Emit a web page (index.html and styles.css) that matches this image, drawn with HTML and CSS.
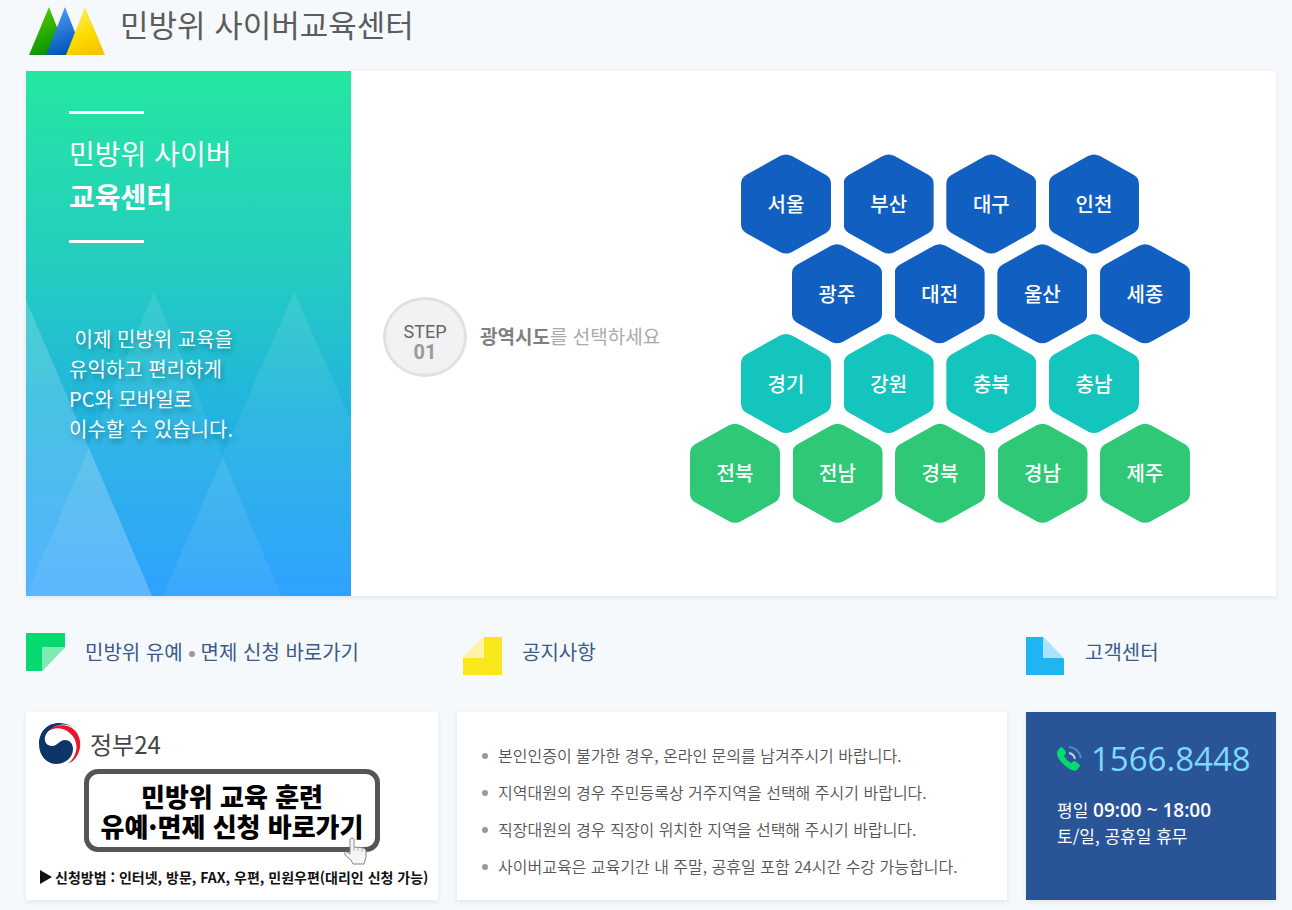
FILE: index.html
```html
<!DOCTYPE html>
<html lang="ko">
<head>
    <meta charset="UTF-8">
    <meta name="viewport" content="width=device-width, initial-scale=1.0">
    <title>민방위 사이버교육센터</title>
    <link rel="stylesheet" href="styles.css">
</head>
<body>

    <header class="header">
        <svg class="logo" width="78" height="49" viewBox="0 0 78 49" aria-hidden="true">
            <defs>
                <linearGradient id="logoGreen" x1="0" y1="0" x2="0.4" y2="1">
                    <stop offset="0" stop-color="#5fd000"/>
                    <stop offset="1" stop-color="#079400"/>
                </linearGradient>
                <linearGradient id="logoBlue" x1="0" y1="0" x2="0.3" y2="1">
                    <stop offset="0" stop-color="#5aa4ff"/>
                    <stop offset="1" stop-color="#0057b8"/>
                </linearGradient>
                <linearGradient id="logoYellow" x1="0.2" y1="0" x2="0.6" y2="1">
                    <stop offset="0" stop-color="#fff06a"/>
                    <stop offset="0.6" stop-color="#fddb00"/>
                    <stop offset="1" stop-color="#f7c400"/>
                </linearGradient>
            </defs>
            <path d="M21 0L40 48H1Z" fill="url(#logoGreen)"/>
            <path d="M37 0L56 48H18Z" fill="url(#logoBlue)"/>
            <path d="M57 0L77 48H38Z" fill="url(#logoYellow)"/>
        </svg>
        <h1 class="site-title">민방위 사이버교육센터</h1>
    </header>

    <main>
        <section class="hero">
            <div class="intro">
                <svg class="intro-bg" viewBox="0 0 325 525" preserveAspectRatio="none" aria-hidden="true">
                    <defs>
                        <linearGradient id="fade" x1="0" y1="0" x2="0" y2="1">
                            <stop offset="0" stop-color="#fff" stop-opacity="0.1"/>
                            <stop offset="1" stop-color="#fff" stop-opacity="0"/>
                        </linearGradient>
                    </defs>
                    <path d="M0 229L126 525H0Z" fill="#fff" fill-opacity="0.18"/>
                    <path d="M128 221L255 525H0Z" fill="url(#fade)"/>
                    <path d="M268 221L325 350V525H136Z" fill="url(#fade)"/>
                    <path d="M63 377L126 525H0Z" fill="#fff" fill-opacity="0.06"/>
                    <path d="M197 387L255 525H136Z" fill="#fff" fill-opacity="0.06"/>
                </svg>
                <h2 class="intro-title">민방위 사이버<br><strong>교육센터</strong></h2>
                <p class="intro-text">&nbsp;이제 민방위 교육을<br>유익하고 편리하게<br>PC와 모바일로<br>이수할 수 있습니다.</p>
            </div>

            <div class="picker">
                <div class="step">
                    <div class="step-badge"><span>STEP</span><b>01</b></div>
                    <p class="step-text"><strong>광역시도</strong>를 선택하세요</p>
                </div>
                <nav class="regions">
                    <div class="row row-center">
                        <a class="hex" href="#">서울</a>
                        <a class="hex" href="#">부산</a>
                        <a class="hex" href="#">대구</a>
                        <a class="hex" href="#">인천</a>
                    </div>
                    <div class="row row-right">
                        <a class="hex" href="#">광주</a>
                        <a class="hex" href="#">대전</a>
                        <a class="hex" href="#">울산</a>
                        <a class="hex" href="#">세종</a>
                    </div>
                    <div class="row row-center">
                        <a class="hex teal" href="#">경기</a>
                        <a class="hex teal" href="#">강원</a>
                        <a class="hex teal" href="#">충북</a>
                        <a class="hex teal" href="#">충남</a>
                    </div>
                    <div class="row">
                        <a class="hex green" href="#">전북</a>
                        <a class="hex green" href="#">전남</a>
                        <a class="hex green" href="#">경북</a>
                        <a class="hex green" href="#">경남</a>
                        <a class="hex green" href="#">제주</a>
                    </div>
                </nav>
            </div>
        </section>

        <div class="info">
            <section class="info-col">
                <div class="info-head">
                    <svg width="39" height="43" viewBox="0 0 39 43" aria-hidden="true">
                        <path d="M0 0H39V14L16 38H0Z" fill="#05d96f"/>
                        <path d="M16 14H39L16 38Z" fill="#7eebb4"/>
                    </svg>
                    <h3>민방위 유예<span class="dot"></span>면제 신청 바로가기</h3>
                </div>
                <a class="card banner" href="#">
                    <span class="gov">
                        <svg width="43" height="42" viewBox="0 0 43 42" aria-hidden="true">
                            <path d="M9 9C16 1 31 -1 39 10C46 21 41 36 30 41C38 34 41 24 36 15C30 5 18 2 9 9Z" fill="#e9152b"/>
                            <path d="M35 4C30 1 26 0 21 0C9 0 1 9 1 21C1 33 9 41 18 41C28 41 35 34 35 26C35 20 31 17 27 17C21 17 20 23 14 23C9 23 6 19 7 14C9 7 16 3 22 2C27 1 31 2 35 4Z" fill="#0d3568"/>
                        </svg>
                        <span>정부24</span>
                    </span>
                    <span class="banner-box">
                        민방위 교육 훈련<br>유예·면제 신청 바로가기
                        <svg class="hand" width="26" height="28" viewBox="0 0 26 28" aria-hidden="true">
                            <path d="M7 2Q9 0 11 2V10L20 11Q23 12 23 14V20L21 27H10L8 23L2 18Q1 14 4 15L7 17Z" fill="#f6f6f6" stroke="#888" stroke-width="1"/>
                            <path d="M11 10V14M15 11V14M19 12V15" stroke="#aaa" stroke-width="1"/>
                        </svg>
                    </span>
                    <span class="banner-note">
                        <svg width="12" height="14" viewBox="0 0 12 14" aria-hidden="true"><path d="M0 0L12 7L0 14Z" fill="#111"/></svg>
                        신청방법 : 인터넷, 방문, FAX, 우편, 민원우편(대리인 신청 가능)
                    </span>
                </a>
            </section>

            <section class="info-col">
                <div class="info-head notice-head">
                    <svg width="39" height="43" viewBox="0 0 39 43" aria-hidden="true">
                        <path d="M21 4H39V42H0V25Z" fill="#f9e71c"/>
                        <path d="M21 4V25H0Z" fill="#fdf5a4"/>
                    </svg>
                    <h3>공지사항</h3>
                </div>
                <ul class="card notice">
                    <li>본인인증이 불가한 경우, 온라인 문의를 남겨주시기 바랍니다.</li>
                    <li>지역대원의 경우 주민등록상 거주지역을 선택해 주시기 바랍니다.</li>
                    <li>직장대원의 경우 직장이 위치한 지역을 선택해 주시기 바랍니다.</li>
                    <li>사이버교육은 교육기간 내 주말, 공휴일 포함 24시간 수강 가능합니다.</li>
                </ul>
            </section>

            <section class="info-col">
                <div class="info-head">
                    <svg width="39" height="43" viewBox="0 0 39 43" aria-hidden="true">
                        <path d="M0 4H17L38 26V42H0Z" fill="#20b5f2"/>
                        <path d="M17 4L38 25H17Z" fill="#aae5fd"/>
                    </svg>
                    <h3>고객센터</h3>
                </div>
                <div class="card contact">
                    <div class="phone">
                        <svg width="25" height="26" viewBox="0 0 25 26" aria-hidden="true">
                            <path d="M1 4L4 1Q5 1 6 2L9 6Q9 8 7 10Q9 14 14 17Q16 15 18 15L23 19Q23 21 20 24Q17 26 11 22Q0 14 0 7Q0 5 1 4Z" fill="#05d96f"/>
                            <path d="M12 7Q17 8 18 13" fill="none" stroke="#c3cfe6" stroke-width="2"/>
                            <path d="M12 1Q22 2 24 12" fill="none" stroke="#6482b5" stroke-width="2"/>
                        </svg>
                        <span>1566.8448</span>
                    </div>
                    <p class="hours">평일 <strong>09:00 ~ 18:00</strong><br>토/일, 공휴일 휴무</p>
                </div>
            </section>
        </div>
    </main>

</body>
</html>
```
FILE: styles.css
```css
* {
    box-sizing: border-box;
}
body {
    margin: 0;
    padding: 0 16px 10px 26px;
    background: #f5f9fc;
    color: #555;
    font-family: "Noto Sans CJK KR", sans-serif;
}
h1, h2, h3, p, ul {
    margin: 0;
    padding: 0;
    font-weight: 400;
}
a {
    text-decoration: none;
}
svg {
    flex: none;
}

.header {
    display: flex;
    align-items: flex-start;
    gap: 14px;
    height: 71px;
    padding-left: 2px;
}
.logo {
    margin-top: 7px;
}
.site-title {
    font-size: 31px;
    line-height: 48px;
    color: #5c5c5c;
}

.hero {
    display: flex;
    min-height: 525px;
    background: white;
    box-shadow: 0 2px 5px rgba(0, 0, 0, 0.08);
}
.intro {
    position: relative;
    flex: 0 0 325px;
    padding: 40px 43px;
    color: white;
    background: linear-gradient(#24e7a0 0%, #24ccc0 38%, #22b4df 65%, #2fa2ff 100%);
}
.intro-bg {
    position: absolute;
    inset: 0;
    width: 100%;
    height: 100%;
}
.intro-title, .intro-text {
    position: relative;
}
.intro-title {
    padding: 21px 0 25px;
    font-size: 28px;
    line-height: 43px;
}
.intro-title strong {
    font-weight: 700;
}
.intro-title::before, .intro-title::after {
    content: "";
    position: absolute;
    left: 0;
    width: 75px;
    height: 3px;
    background: white;
}
.intro-title::before { top: 0; }
.intro-title::after { bottom: 0; }
.intro-text {
    margin-top: 81px;
    font-size: 20px;
    line-height: 30px;
    white-space: nowrap;
    text-shadow: 2px 4px 5px rgba(0, 0, 0, 0.3);
}

.picker {
    flex: 1;
    display: flex;
    align-items: center;
    justify-content: space-between;
    padding: 0 86px 0 32px;
}
.step {
    display: flex;
    align-items: center;
    gap: 13px;
    padding-top: 6px;
}
.step-badge {
    display: flex;
    flex-direction: column;
    align-items: center;
    width: 84px;
    height: 80px;
    padding-top: 21px;
    border: 3px solid #e1e1e1;
    border-radius: 50%;
    background: #f2f2f2;
    color: #666;
    font-family: Roboto, sans-serif;
    font-size: 18px;
    line-height: 21px;
}
.step-badge b {
    color: #999;
    font-size: 20px;
}
.step-text {
    padding-bottom: 2px;
    font-size: 19px;
    color: #aaa;
    white-space: nowrap;
}
.step-text strong {
    font-weight: 700;
    color: #808080;
}

/* rows are shorter than the hexagons so the tips interlock */
.regions {
    display: grid;
    grid-auto-rows: 1fr;
    width: 500px;
    height: 359px;
}
.row {
    display: flex;
    justify-content: space-between;
    min-height: 0;
}
.row-center { padding: 0 51px; }
.row-right { padding-left: 102px; }
.hex {
    width: 90px;
    height: 100px;
    background: #125fc2;
    color: white;
    font-size: 20px;
    font-weight: 500;
    line-height: 100px;
    text-align: center;
    clip-path: path("M39 2Q45 -1 51 2L85 21Q90 24 90 30V70Q90 76 85 79L51 98Q45 101 39 98L5 79Q0 76 0 70V30Q0 24 5 21Z");
}
.hex:hover { background: #0d4ea3; }
.hex.teal { background: #14c5bd; }
.hex.green { background: #2fc877; }

.info {
    display: grid;
    grid-template-columns: 412fr 550fr 250fr;
    column-gap: 19px;
}
.info-col {
    display: flex;
    flex-direction: column;
    min-width: 0;
}
.info-head {
    display: flex;
    align-items: center;
    gap: 20px;
    height: 116px;
}
.notice-head {
    padding-left: 6px;
}
.info-head h3 {
    padding-bottom: 5px;
    font-size: 20px;
    color: #3d5a8a;
}
.dot {
    display: inline-block;
    width: 6px;
    height: 6px;
    margin: 0 6px;
    border-radius: 50%;
    background: #999;
    vertical-align: 3px;
}
.card {
    flex: 1;
    min-height: 188px;
    background: white;
    box-shadow: 0 2px 6px rgba(0, 0, 0, 0.08);
}

.banner {
    display: flex;
    flex-direction: column;
    padding: 11px 12px 0;
    color: #111;
    white-space: nowrap;
}
.gov {
    display: flex;
    align-items: center;
    gap: 9px;
    height: 42px;
    color: #444;
    font-size: 24px;
    line-height: 38px;
}
.banner-box {
    position: relative;
    align-self: center;
    width: 296px;
    margin-top: 4px;
    padding: 7px 0 6px;
    border: 5px solid #555;
    border-radius: 14px;
    color: #000;
    font-size: 26px;
    font-weight: 900;
    line-height: 30px;
    text-align: center;
}
.hand {
    position: absolute;
    right: 6px;
    bottom: -18px;
}
.banner-note {
    display: flex;
    align-items: center;
    gap: 3px;
    margin-top: 13px;
    padding-left: 2px;
    font-size: 14px;
    font-weight: 700;
    line-height: 24px;
}

.notice {
    padding: 25px 25px 15px;
    list-style: none;
}
.notice li {
    display: flex;
    align-items: center;
    gap: 10px;
    font-size: 16px;
    font-weight: 350;
    line-height: 37px;
    color: #555;
}
.notice li::before {
    content: "";
    width: 6px;
    height: 6px;
    border-radius: 50%;
    background: #999;
}

.contact {
    padding: 27px 20px 20px 31px;
    background: #295598;
    color: white;
}
.phone {
    display: flex;
    align-items: center;
    gap: 9px;
    color: #7fd8ff;
    font-family: "Open Sans", sans-serif;
    font-size: 33px;
    font-weight: 500;
    line-height: 40px;
}
.hours {
    margin-top: 18px;
    font-size: 17px;
    line-height: 26px;
}
.hours strong {
    font-family: "Open Sans", sans-serif;
    font-size: 19px;
    font-weight: 600;
}
```
